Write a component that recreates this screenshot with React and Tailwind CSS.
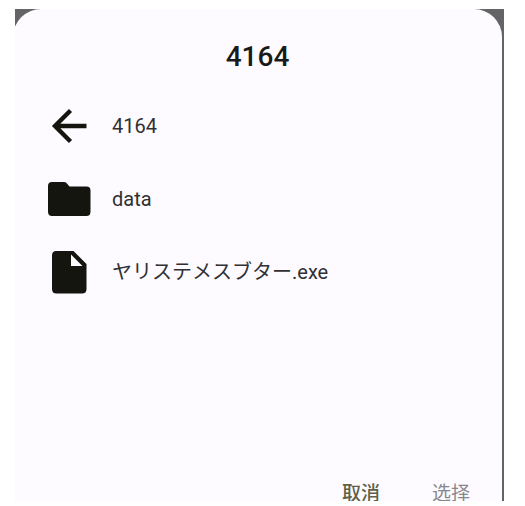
import React from 'react';

const ArrowIcon = () => (
  <svg viewBox="0 0 44 44" className="w-11 h-11" aria-hidden="true">
    <path d="M23.5 6.5 L8 22 L23.5 37.5 M8 22 H39.5" fill="none" stroke="#14150f" strokeWidth="4.4" />
  </svg>
);

const FolderIcon = () => (
  <svg viewBox="0 0 44 44" className="w-11 h-11" aria-hidden="true">
    <path
      d="M5 5 H17 Q18.5 5 19.5 6 L22.5 9.5 H39.5 Q43.5 9.5 43.5 13.5 V34.5 Q43.5 39 39.5 39 H5 Q1 39 1 34.5 V9 Q1 5 5 5 Z"
      fill="#14150f"
    />
  </svg>
);

const FileIcon = () => (
  <svg viewBox="0 0 44 44" className="w-11 h-11" aria-hidden="true">
    <path
      d="M9 1 H26.5 L39.5 14 V39 Q39.5 43.5 35 43.5 H9.5 Q5 43.5 5 39 V5.5 Q5 1 9 1 Z M24 4.5 V16 H35.5 Z"
      fill="#14150f"
      fillRule="evenodd"
    />
  </svg>
);

const entries = [
  { name: '4164', Icon: ArrowIcon },
  { name: 'data', Icon: FolderIcon },
  { name: 'ヤリステメスブター.exe', Icon: FileIcon },
];

const App = () => {
  return (
    <div className="h-screen bg-white pt-[9px] pb-[5px] pl-[15px] pr-[21px] font-[Roboto,'Noto_Sans_CJK_SC',sans-serif]">
      <div className="h-full overflow-hidden bg-[#646366]">
        <div
          role="dialog"
          aria-labelledby="picker-title"
          className="-ml-0.5 mr-0.5 h-full flex flex-col rounded-t-[28px] bg-[#fdfbff]"
        >
          <h1 id="picker-title" className="pt-7 text-center text-[28px] leading-10 font-medium text-[#1a1b18]">
            4164
          </h1>

          <ul className="mt-3 px-[34px] flex-1">
            {entries.map(({ name, Icon }) => (
              <li key={name}>
                <button className="w-full h-[73px] flex items-center gap-[21px] text-left text-[20px] leading-7 text-[#303034]">
                  <Icon />
                  <span>{name}</span>
                </button>
              </li>
            ))}
          </ul>

          {/* Actions sit on the bottom edge and get cut off by it */}
          <div className="h-[21px] shrink-0 flex justify-end gap-[52px] pr-8 text-[19px] leading-7">
            <button className="font-medium text-[#5f6146]">取消</button>
            <button className="text-[#88878b]">选择</button>
          </div>
        </div>
      </div>
    </div>
  );
};

export default App;
